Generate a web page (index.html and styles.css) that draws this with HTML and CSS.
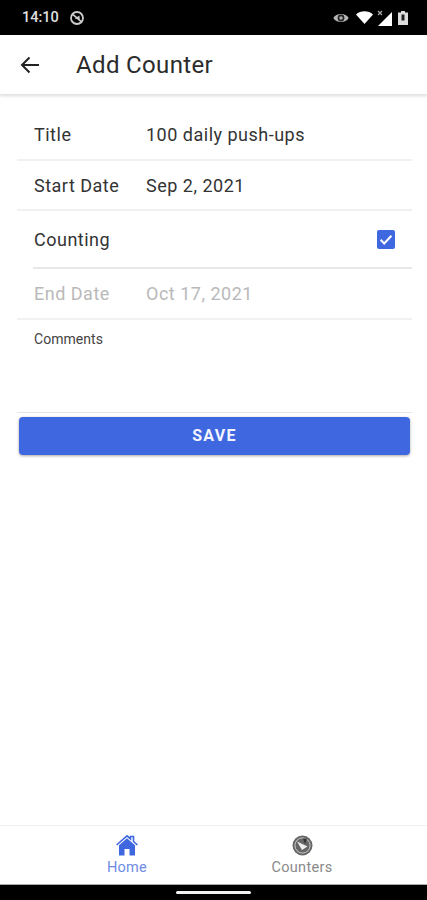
FILE: index.html
```html
<!DOCTYPE html>
<html lang="en">
<head>
  <meta charset="UTF-8">
  <meta name="viewport" content="width=device-width, initial-scale=1.0">
  <title>Add Counter</title>
  <link rel="stylesheet" href="styles.css">
</head>
<body>

<div class="screen">
  <div class="status-bar">
    <div class="status-left">
      <span class="clock">14:10</span>
      <svg class="status-icon" width="16" height="16" viewBox="0 0 16 16">
        <circle cx="8" cy="8" r="6" fill="none" stroke="#ccc" stroke-width="1.8"/>
        <path d="M3.8 4.4 L12.2 11.6" stroke="#ccc" stroke-width="1.6"/>
        <path d="M5.6 8.4 L10.4 5.4 L10.8 9.6 Z" fill="#ccc"/>
      </svg>
    </div>
    <div class="status-right">
      <svg class="eye" width="16" height="12" viewBox="0 0 16 12">
        <path d="M0.3 6 C3 0.6 13 0.6 15.7 6 C13 11.4 3 11.4 0.3 6 Z" fill="#b5b5b5"/>
        <circle cx="8" cy="6" r="3.4" fill="#222"/>
        <circle cx="8" cy="6" r="1.8" fill="#aaa"/>
      </svg>
      <svg class="wifi" width="17" height="13" viewBox="0 0 17 13">
        <path d="M0 3.6 C4.5 -0.8 12.5 -0.8 17 3.6 L8.5 13 Z" fill="#fff"/>
      </svg>
      <svg class="signal" width="16" height="16" viewBox="0 0 16 16">
        <path d="M16 2 V16 H2 Z" fill="#fff"/>
        <path d="M2 1 L6 5 M6 1 L2 5" stroke="#aaa" stroke-width="1.2"/>
      </svg>
      <svg class="battery" width="10" height="14" viewBox="0 0 10 14">
        <path d="M3 0 H7 V1.5 H10 V14 H0 V1.5 H3 Z" fill="#ddd"/>
        <path d="M3.5 3.5 H6.5 V9.5 H3.5 Z" fill="#222"/>
      </svg>
    </div>
  </div>

  <div class="app-bar">
    <svg class="back" width="20" height="18" viewBox="0 0 20 18">
      <path d="M19 9 H2.5 M9.5 1.5 L2 9 L9.5 16.5" fill="none" stroke="#222" stroke-width="2"/>
    </svg>
    <h1>Add Counter</h1>
  </div>

  <div class="form">
    <div class="row row-title">
      <span class="label">Title</span>
      <span class="value">100 daily push-ups</span>
    </div>
    <div class="row row-start">
      <span class="label">Start Date</span>
      <span class="value">Sep 2, 2021</span>
    </div>
    <div class="row row-counting">
      <span class="label">Counting</span>
      <svg class="check" width="18" height="19" viewBox="0 0 18 19">
        <rect width="18" height="19" rx="2" fill="#3f68e0"/>
        <path d="M3.6 9.8 L7.2 13.5 L14.4 5.8" fill="none" stroke="#fff" stroke-width="2"/>
      </svg>
    </div>
    <div class="row row-end disabled">
      <span class="label">End Date</span>
      <span class="value">Oct 17, 2021</span>
    </div>
    <div class="comments">Comments</div>
    <button class="save">SAVE</button>
  </div>

  <div class="tabs">
    <div class="tab active">
      <svg width="22" height="21" viewBox="0 0 22 21">
        <path d="M0.6 10 L11 0.8 L14.5 3.9 V1.5 H17.5 V6.5 L21.4 10" fill="none" stroke="#3f68e0" stroke-width="1.6"/>
        <path d="M11 3.2 L19 10.2 V20.5 H13.5 V14 H8.5 V20.5 H3 V10.2 Z" fill="#3f68e0"/>
      </svg>
      <span>Home</span>
    </div>
    <div class="tab">
      <svg width="21" height="21" viewBox="0 0 21 21">
        <circle cx="10.5" cy="10.5" r="10" fill="#666"/>
        <circle cx="10.5" cy="10.5" r="7.6" fill="none" stroke="#ccc" stroke-width="1"/>
        <path d="M5 6.5 L15.5 11.5 L10 15 Z" fill="#eee"/>
        <path d="M11 3.5 H15 L13 9 Z" fill="#333"/>
      </svg>
      <span>Counters</span>
    </div>
  </div>

  <div class="nav-bar"><div class="home-pill"></div></div>
</div>

</body>
</html>
```
FILE: styles.css
```css
* {
  box-sizing: border-box;
}

body {
  margin: 0;
  font-family: Roboto, sans-serif;
  background: #fff;
}

.screen {
  height: 900px;
  display: flex;
  flex-direction: column;
}

.status-bar {
  height: 35px;
  background: #000;
  color: #e0e0e0;
  display: flex;
  align-items: center;
  justify-content: space-between;
  padding: 0 19px 0 22px;
}

.status-left, .status-right {
  display: flex;
  align-items: center;
}

.status-left {
  gap: 10px;
}

.clock {
  font-size: 14.5px;
  font-weight: 500;
}

.wifi {
  margin-left: 7px;
}

.signal {
  margin: 0 6px 0 3px;
}

.battery {
  margin-left: 0;
}

.app-bar {
  height: 60px;
  display: flex;
  align-items: center;
  padding-left: 20px;
  border-bottom: 1px solid #e4e4e4;
  box-shadow: 0 1px 3px rgba(0,0,0,0.15);
}

.app-bar h1 {
  margin: 0 0 0 36px;
  font-size: 24px;
  font-weight: 400;
  letter-spacing: 0.35px;
  color: #2b2b2b;
}

.form {
  flex: 1;
  padding: 0 15px 0 17px;
}

.row {
  display: flex;
  align-items: center;
  padding-left: 17px;
  font-size: 18px;
  letter-spacing: 0.5px;
  color: #333;
  border-bottom: 2px solid #f1f1f1;
}

.label {
  width: 112px;
}

.row-title {
  height: 66px;
  padding-top: 15px;
}

.row-start {
  height: 50px;
}

.row-counting {
  height: 58px;
  justify-content: space-between;
  padding: 1px 17px 0 1px;
  margin-left: 16px;
  border-bottom-color: #e8e8e8;
}

.row-end {
  height: 51px;
}

.disabled {
  color: #b9b9b9;
}

.comments {
  height: 93px;
  padding: 11px 0 0 17px;
  font-size: 14px;
  letter-spacing: 0.05px;
  color: #444;
  border-bottom: 1px solid #e6e6e6;
}

.save {
  display: block;
  width: 391px;
  height: 38px;
  margin: 4px 0 0 2px;
  padding-bottom: 3px;
  border: none;
  border-radius: 4px;
  background: #3f68e0;
  color: #f4f6ff;
  font-family: Roboto, sans-serif;
  font-size: 16px;
  font-weight: 700;
  letter-spacing: 1.3px;
  box-shadow: 0 1px 3px rgba(0,0,0,0.35);
}

.tabs {
  height: 59px;
  display: flex;
  justify-content: center;
  gap: 88px;
  border-top: 1px solid #f0f0f0;
  padding-left: 2px;
}

.tab {
  width: 87px;
  display: flex;
  flex-direction: column;
  align-items: center;
  padding-top: 9px;
  font-size: 14.5px;
  color: #8a8a8a;
}

.tab span {
  margin-top: 3px;
  letter-spacing: 0.3px;
}

.tab.active {
  color: #6e8ce6;
}

.nav-bar {
  height: 16px;
  background: #000;
  border-top: 1px solid #aaa;
  display: flex;
  justify-content: center;
  padding-top: 6px;
}

.home-pill {
  width: 75px;
  height: 3px;
  border-radius: 2px;
  background: #f2f2f2;
}
```
